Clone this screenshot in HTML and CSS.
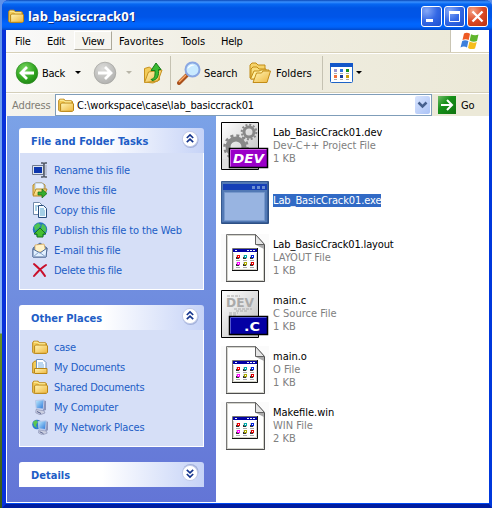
FILE: index.html
```html
<!DOCTYPE html>
<html lang="en">
<head>
<meta charset="utf-8">
<title>lab_basiccrack01</title>
<link rel="stylesheet" href="styles.css">
</head>
<body>
<svg class="defs" aria-hidden="true">
  <defs>
    <linearGradient id="gold" x1="0" y1="0" x2="1" y2="1"><stop offset="0" stop-color="#fff6b8"/><stop offset="1" stop-color="#eeb63c"/></linearGradient>
    <linearGradient id="paper" x1="0" y1="0" x2="1" y2="1"><stop offset="0" stop-color="#ffffff"/><stop offset="1" stop-color="#bdbdbd"/></linearGradient>
    <radialGradient id="green" cx=".4" cy=".3" r=".8"><stop offset="0" stop-color="#7cd664"/><stop offset=".6" stop-color="#2fa51f"/><stop offset="1" stop-color="#1c7d12"/></radialGradient>
    <radialGradient id="gray" cx=".4" cy=".3" r=".8"><stop offset="0" stop-color="#dcdcda"/><stop offset="1" stop-color="#adadab"/></radialGradient>
    <linearGradient id="screen" x1="0" y1="0" x2="1" y2="1"><stop offset="0" stop-color="#c4efff"/><stop offset="1" stop-color="#2472d8"/></linearGradient>
    <symbol id="folder" viewBox="0 0 16 16">
      <path d="M.7 13.200V3.500l1-1.300h4.400l1.300 1.600h6.200l.9 1v8.400l-.8 1H1.600z" fill="#f3cc59" stroke="#b98514"/>
      <path d="M2.600 13.600V7l.9-1h11.100l.9 1v6.500l-1 .8H3.400z" fill="url(#gold)" stroke="#b98514"/>
      <path d="M2 3.200h3.500L7 4.800h6" fill="none" stroke="#fff3a8"/>
    </symbol>
    <symbol id="computer" viewBox="0 0 16 16">
      <path d="M11 1l3 1v9l-3 1z" fill="#8c94ba"/>
      <path d="M3.500 1.500L12 .8l-.8 9.300-7-.8z" fill="url(#screen)" stroke="#b9c7e8"/>
      <path d="M4 10.500l8 1.300 1 2.200-5 1.800-4.200-2z" fill="#cbcfe0" stroke="#8991b5" stroke-width=".7"/>
      <path d="M5 12.500l4 2" stroke="#515c8a"/>
    </symbol>
    <symbol id="chevrons" viewBox="0 0 20 20">
      <circle cx="10.500" cy="11" r="8" fill="#8c9bc9" opacity=".65"/>
      <circle cx="10" cy="10" r="7.600" fill="#fff" stroke="#c3cce9"/>
      <path d="M6.800 9L10 6l3.200 3M6.800 13.200l3.200-3 3.200 3" fill="none" stroke="#15358d" stroke-width="1.700"/>
    </symbol>
    <symbol id="appfile" viewBox="0 0 48 48">
      <path fill="#fbfbfb" d="M0 0h48v48H0z"/>
      <path d="M5.500.5h29l9 10v37h-38z" fill="#fff" stroke="#777"/>
      <path d="M6.500 47V1.500H34M42.500 12v34.500H7" fill="none" stroke="#d4d4cc"/>
      <path d="M34.500.5v10h9z" fill="#e5e5e5" stroke="#606060"/>
      <path d="M35 11h8v4z" fill="#aaa"/>
      <path d="M43.500 11v36.500H5" fill="none" stroke="#4d4d4d"/>
      <path d="M11.500 14.500h25v22h-25z" fill="#fff" stroke="#77776f"/>
      <path d="M11 36.500h25.500V14" fill="none" stroke="#111"/>
      <path d="M12 15h24v3H12z" fill="#0202a4"/>
      <path d="M14 16h2v1h-2zM26 16h2v1h-2zM29 16h2v1h-2zM32 16h2v1h-2z" fill="#e9f3ff"/>
      <path d="M12.500 19v16.500H35.500V19" fill="none" stroke="#d4d4c8"/>
      <g shape-rendering="crispEdges">
      <path d="M15 21h4v4h-4zM22 21h4v4h-4zM29 21h4v4h-4zM15 28h4v4h-4zM22 28h4v4h-4zM29 28h4v4h-4z" fill="#d7d7d7"/>
      <path d="M15 23h3v2h-3zM22 23h3v2h-3zM29 23h3v2h-3zM15 30h3v2h-3zM22 30h3v2h-3zM29 30h3v2h-3z" fill="#333"/>
      <path d="M16 21h3v3h-3z" fill="#e00"/><path d="M23 21h3v3h-3z" fill="#0aa"/><path d="M30 21h3v3h-3z" fill="#02d"/>
      <path d="M16 28h3v3h-3z" fill="#f0f"/><path d="M23 28h3v3h-3z" fill="#aa0"/><path d="M30 28h3v3h-3z" fill="#d00"/>
      <path d="M17 22h1v1h-1zM24 22h1v1h-1zM31 22h1v1h-1zM17 29h1v1h-1zM24 29h1v1h-1zM31 29h1v1h-1z" fill="#fff"/>
      <path d="M15 26h4v1h-4zM22 26h4v1h-4zM29 26h4v1h-4zM15 33h4v1h-4zM22 33h4v1h-4zM29 33h4v1h-4z" fill="#aaa"/>
      </g>
    </symbol>
  </defs>
</svg>

<div class="desktop">
<div class="window">
  <header class="titlebar">
    <svg class="i16"><use href="#folder"/></svg>
    <h1 class="title">lab_basiccrack01</h1>
    <div class="controls">
      <span class="ctl"><svg viewBox="0 0 21 21"><path d="M5 13h7v3H5z" fill="#fff"/></svg></span>
      <span class="ctl"><svg viewBox="0 0 21 21"><path d="M5.500 6v9.500h10V6" fill="none" stroke="#fff"/><path d="M5 5h11v3H5z" fill="#fff"/></svg></span>
      <span class="ctl close"><svg viewBox="0 0 21 21"><path d="M5.500 5.500l10 10M15.500 5.500l-10 10" stroke="#fff" stroke-width="2.300"/></svg></span>
    </div>
  </header>

  <nav class="menubar">
    <span class="m file">File</span><span class="m edit">Edit</span><span class="m view">View</span><span class="m fav">Favorites</span><span class="m tools">Tools</span><span class="m help">Help</span>
    <span class="flag"><svg viewBox="0 0 22 20">
      <path d="M5 2.500c2-1.300 4-1 6 .2L9.700 9c-2-1-4-1.200-6.200 0z" fill="#ee5a24"/>
      <path d="M12 3.200c2.500 1.400 5 1.500 7.500.4L18 10c-2.500 1-5 .8-7.300-.6z" fill="#60b52c"/>
      <path d="M3.200 10c2-1.200 4-1 6.200.1L8 16.500c-2-1.200-4.200-1.300-6.500 0z" fill="#3e80dc"/>
      <path d="M10.500 10.600c2.500 1.300 5 1.400 7.300.5L16 17.500c-2.500 1-4.800.7-7-.6z" fill="#f6bd1c"/>
    </svg></span>
  </nav>

  <div class="toolbar">
    <svg class="circle" viewBox="0 0 24 24"><circle cx="12" cy="12" r="10.800" fill="url(#green)" stroke="#2a8a20" stroke-width=".7"/><path d="M19 12H7M12 6l-6 6 6 6" fill="none" stroke="#fff" stroke-width="2.800"/></svg>
    <span class="t back">Back</span><i class="drop"></i>
    <svg class="circle fwd" viewBox="0 0 24 24"><circle cx="12" cy="12" r="10.800" fill="url(#gray)" stroke="#a0a09c" stroke-width=".7"/><path d="M5 12h12M12 6l6 6-6 6" fill="none" stroke="#fff" stroke-width="2.800"/></svg>
    <i class="drop off"></i>
    <svg class="up" viewBox="0 0 20 24">
      <path d="M1.500 21V7.500l5-1.500 2 2 8 1v10L10 22z" fill="#f3cc59" stroke="#c6921f"/>
      <path d="M1.500 21.500l4-10.500L19 9l-4 11z" fill="url(#gold)" stroke="#c6921f"/>
      <path d="M8 18.500c4-1 4.200-4 4-9H8L13 2l5 6.500h-2.500c.5 6-1 10.500-6.500 11z" fill="#3bbb33" stroke="#157d18"/>
    </svg>
    <i class="sep s1"></i>
    <svg class="i24" viewBox="0 0 24 24">
      <path d="M2 22l8-8" stroke="#a9511c" stroke-width="4" stroke-linecap="round"/><path d="M2 21l7-7" stroke="#ffac68" stroke-width="1.500"/>
      <circle cx="15.500" cy="8.500" r="7" fill="#c9eaff" stroke="#8aa7e2" stroke-width="2"/><path d="M10.500 8c1-4 5-5 7-3.500-3 .2-5 1.500-7 3.500z" fill="#fff"/>
    </svg>
    <span class="t search">Search</span>
    <svg class="i24" viewBox="0 0 24 24">
      <path d="M2 17V4l2-2h4l2 2h7v13z" fill="#f5d36a" stroke="#c28c16"/>
      <path d="M3 17V8l2-2h4l2 2h7v10H3z" fill="#f8dd7b" stroke="#c28c16"/>
      <path d="M2.500 18L6 10h5l2-1h8l-3 9z" fill="#fff0a0" stroke="#c28c16"/>
      <path d="M5 21.500L8.500 12h5l1.500-2h7.500L19 21.500z" fill="url(#gold)" stroke="#c28c16"/>
    </svg>
    <span class="t folders">Folders</span>
    <i class="sep s2"></i>
    <svg class="views" viewBox="0 0 23 20">
      <rect x=".5" y=".5" width="22" height="19" rx="1" fill="#fff" stroke="#1d63c7"/><path d="M0 0h23v4H0z" fill="#1256c9"/>
      <path d="M4 6h3v3H4z" fill="#9a93cf"/><path d="M10 6h3v3h-3z" fill="#2b73e0"/><path d="M16 6h3v3h-3z" fill="#14921c"/>
      <path d="M4 12h3v3H4z" fill="#f3703b"/><path d="M10 12h3v3h-3z" fill="#123a99"/><path d="M16 12h3v3h-3z" fill="#cc9f0b"/>
      <path d="M4 10.500h3M10 10.500h3M16 10.500h3M4 16.500h3M10 16.500h3M16 16.500h3" stroke="#aaa"/>
    </svg>
    <i class="drop"></i>
  </div>

  <div class="address">
    <span class="alabel">Address</span>
    <div class="abox">
      <svg class="i16"><use href="#folder"/></svg><span class="path">C:\workspace\case\lab_basiccrack01</span>
      <span class="combo"><svg viewBox="0 0 15 18"><path d="M3.500 6.500L7.500 10.500l4-4" fill="none" stroke="#46608e" stroke-width="2.500"/></svg></span>
    </div>
    <span class="gobtn"><svg viewBox="0 0 18 18"><path d="M3 9h10M9 4l5 5-5 5" fill="none" stroke="#fff" stroke-width="2"/></svg></span>
    <span class="go">Go</span>
  </div>

  <div class="content">
    <aside class="side">
      <section class="panel tasks">
        <h2 class="phead"><span>File and Folder Tasks</span><svg class="chev"><use href="#chevrons"/></svg></h2>
        <ul class="links">
          <li><svg class="i16" viewBox="0 0 16 16"><path d="M.5 3.500h11v9H.5z" fill="#dce4ef" stroke="#6e7991"/><path d="M2 5h8v6H2z" fill="#0c36af"/><path d="M9 1h2l1 1 1-1h2M12 2v12M9 15h2l1-1 1 1h2" fill="none" stroke="#545b68" stroke-width="1.600"/><path d="M14 3v10" stroke="#9da4b2"/></svg><span>Rename this file</span></li>
          <li><svg class="i16" viewBox="0 0 16 16"><path d="M1 3l3-2h6l3 2v10H1z" fill="#f2ce6b" stroke="#b98a28"/><path d="M3 1h7l2 2v5H3z" fill="#edf6ff" stroke="#91aac7" stroke-width=".7"/><path d="M1 14l3-7h11l-3 7z" fill="url(#gold)" stroke="#b98a28"/><path d="M6 10h4V7l5 4.500L10 16v-3H6z" fill="#35ae2d" stroke="#176b1c" stroke-width=".7"/></svg><span>Move this file</span></li>
          <li><svg class="i16" viewBox="0 0 16 16"><path d="M1.500.5h6l3 3v9h-9z" fill="#fff" stroke="#718aaa"/><path d="M6.500 3.500h5l3 3v9h-8z" fill="#f2faff" stroke="#294d7d"/><path d="M3 4h3M3 6h2M3 8h2M8 7h4M8 9h5M8 11h5M8 13h5" stroke="#56a3cd"/></svg><span>Copy this file</span></li>
          <li><svg class="i16" viewBox="0 0 16 16"><circle cx="8" cy="7.500" r="7.200" fill="#2673be"/><path d="M2 4l4-3 3 2-2 3-4 3zM10 2c4 1 5 5 4 8l-3-1-2-3z" fill="#4dc454"/><path d="M8 6l6 6h-3v3H5v-3H2z" fill="#45bf2f" stroke="#16751e"/></svg><span class="publish">Publish this file to the Web</span></li>
          <li><svg class="i16" viewBox="0 0 16 16"><path d="M1 6l7-5 7 5-1 9H1z" fill="#6f94c2" stroke="#526c98"/><path d="M3 3l9-1 2 8H3z" fill="#fff2c9" stroke="#d9a247" stroke-width=".7"/><path d="M1 7l7 4 7-5-1 9H1z" fill="#e2f0ff" stroke="#526c98"/><path d="M1 15l6-5 7 5" fill="none" stroke="#8aa5cc"/></svg><span>E-mail this file</span></li>
          <li><svg class="i16" viewBox="0 0 16 16"><path d="M2 2c5 4 8 7 11 12M14 3C9 6 6 9 2 14" fill="none" stroke="#c9102b" stroke-width="2" stroke-linecap="round"/></svg><span>Delete this file</span></li>
        </ul>
      </section>
      <section class="panel places">
        <h2 class="phead"><span>Other Places</span><svg class="chev"><use href="#chevrons"/></svg></h2>
        <ul class="links">
          <li><svg class="i16"><use href="#folder"/></svg><span>case</span></li>
          <li><svg class="i16" viewBox="0 0 16 16"><path d="M.7 14V4l2-2h3v12z" fill="#f3cc59" stroke="#b98514"/><path d="M4.500.5H11l3 3V11H4.500z" fill="#fff" stroke="#6e91bf"/><path d="M6 4h5M6 6h6M6 8h6" stroke="#79aee0"/><path d="M2.500 14V9.500H15v5H3z" fill="url(#gold)" stroke="#b98514"/></svg><span>My Documents</span></li>
          <li><svg class="i16"><use href="#folder"/></svg><span>Shared Documents</span></li>
          <li><svg class="i16"><use href="#computer"/></svg><span>My Computer</span></li>
          <li><svg class="i16" viewBox="0 0 16 16"><circle cx="5" cy="5.500" r="4.800" fill="#2e7bd0"/><path d="M1 3l3-2 2 2-2 3 1 3-3-2z" fill="#5bc750"/><use href="#computer" x="3" y="1" width="15" height="15"/></svg><span class="network">My Network Places</span></li>
        </ul>
      </section>
      <section class="panel details">
        <h2 class="phead"><span>Details</span><svg class="chev down"><use href="#chevrons"/></svg></h2>
      </section>
    </aside>

    <main class="files">
      <article class="f">
        <svg class="i48" viewBox="0 0 48 48">
          <path d="M.5.500h37v47H.5z" fill="url(#paper)" stroke="#000"/>
          <g fill="none" stroke="#888"><circle cx="28" cy="10" r="5" stroke-width="3"/><circle cx="28" cy="10" r="7.300" stroke-width="2" stroke-dasharray="2 1.820"/><circle cx="15" cy="25" r="8" stroke-width="5"/><circle cx="15" cy="25" r="11.500" stroke-width="2.500" stroke-dasharray="3 3.020"/></g>
          <path d="M1 37h7v10H1z" fill="#ddd"/>
          <path d="M8.500 26.500h38v19h-38z" fill="#9a00c8" stroke="#000" stroke-width="1.500"/><path d="M9.500 44.500v-17h36" fill="none" stroke="#cf62e8"/>
          <text class="dev" x="12" y="41" textLength="31" lengthAdjust="spacingAndGlyphs">DEV</text>
        </svg>
        <div class="ft"><span class="n">Lab_BasicCrack01.dev</span><span class="d">Dev-C++ Project File</span><span class="d">1 KB</span></div>
      </article>
      <article class="f">
        <svg class="i48" viewBox="0 0 48 48">
          <path d="M.5 3.500h47v42H.5z" fill="#5279b5" stroke="#36598f"/><path d="M2 6h44v6H2z" fill="#153fb7"/><path d="M31 8h3v3h-3zM36 8h3v3h-3zM41 8h3v3h-3z" fill="#6c8fd2"/>
          <path d="M3.500 14.500h40v28h-40z" fill="#98b4e1" stroke="#7799cd"/><path d="M47 4v41H1" fill="none" stroke="#24497c"/>
        </svg>
        <div class="ft single"><span class="n sel">Lab_BasicCrack01.exe</span></div>
      </article>
      <article class="f"><svg class="i48"><use href="#appfile"/></svg><div class="ft"><span class="n layout">Lab_BasicCrack01.layout</span><span class="d">LAYOUT File</span><span class="d">1 KB</span></div></article>
      <article class="f">
        <svg class="i48" viewBox="0 0 48 48">
          <path d="M.5.500h37v47H.5z" fill="url(#paper)" stroke="#000"/>
          <path d="M6 6h13M13 19h18M15 21h12M8 23h9M8 25h7" stroke="#aaa" stroke-dasharray="3 1"/>
          <text class="ghost" x="5" y="17" textLength="28" lengthAdjust="spacingAndGlyphs">DEV</text>
          <path d="M8.500 26.500h38v18h-38z" fill="#0400a4" stroke="#000" stroke-width="1.500"/><path d="M9.500 43.500v-16h36" fill="none" stroke="#5457ce"/>
          <text class="cee" x="23" y="41" textLength="16" lengthAdjust="spacingAndGlyphs">.C</text>
        </svg>
        <div class="ft"><span class="n short">main.c</span><span class="d">C Source File</span><span class="d">1 KB</span></div>
      </article>
      <article class="f"><svg class="i48"><use href="#appfile"/></svg><div class="ft"><span class="n short">main.o</span><span class="d">O File</span><span class="d">1 KB</span></div></article>
      <article class="f"><svg class="i48"><use href="#appfile"/></svg><div class="ft"><span class="n short">Makefile.win</span><span class="d">WIN File</span><span class="d">2 KB</span></div></article>
    </main>
  </div>
</div>
</div>
</body>
</html>
```
FILE: styles.css
```css
* { box-sizing: border-box; }
body { margin: 0; width: 492px; height: 508px; overflow: hidden; font: 11px/13px "DejaVu Sans Condensed", "DejaVu Sans", sans-serif; font-stretch: condensed; color: #000; letter-spacing: -.25px; }
.defs { position: absolute; width: 0; height: 0; }
svg { display: block; flex: none; }
span { white-space: nowrap; }
.desktop { height: 508px; padding-left: 2px; background: linear-gradient(#5e91ea 0, #8db7f5 332px, #8db7f5 333px, #6b9421 334px, #365716 100%); }
.window { height: 508px; border: solid #003bda; border-width: 0 3px 4px 4px; border-color: #003bda #0038dc #001da0 #0831d9; border-radius: 7px 7px 0 0; background: #fff; display: flex; flex-direction: column; box-shadow: inset 0 -1px #0048f1; }
.i16 { width: 16px; height: 16px; }
.i24 { width: 24px; height: 24px; }

.titlebar { height: 30px; flex: none; margin: 0 -3px 0 -4px; padding: 2px 4px 0 6px; display: flex; align-items: center; border-radius: 7px 7px 0 0; background: linear-gradient(#0a48b8 0, #3990ff 2px, #0768f2 4px, #0055e5 8px, #0055e8 17px, #0066ff 24px, #0062f8 27px, #0049cb 30px); }
.title { margin: 0 0 0 4px; color: #fff; font: bold 13px/18px "Noto Sans", sans-serif; font-stretch: normal; letter-spacing: 0; text-shadow: 1px 1px #0b2b83; }
.controls { margin-left: auto; display: flex; gap: 2px; }
.ctl { width: 21px; height: 21px; border: 1px solid #fff; border-radius: 3px; background: radial-gradient(circle at 25% 20%, #86a9f7, #3468e5 50%, #1c50cf); }
.ctl svg { width: 21px; height: 21px; margin: -1px; }
.close { background: radial-gradient(circle at 25% 20%, #f4a184, #dc4a25 50%, #b9300c); }

.menubar { height: 24px; flex: none; display: flex; align-items: flex-start; background: linear-gradient(90deg, #fafafa, #f1efe4 40%, #ece9d8); border-bottom: 1px solid #fff; box-shadow: inset 0 -1px #d6d0b9; }
.m { height: 19px; margin-top: 1px; line-height: 21px; }
.file { width: 32px; margin-left: 9px; }
.edit { width: 27px; }
.view { width: 38px; padding-left: 7px; border: 1px solid #fff; border-right-color: #aca899; border-bottom-color: #aca899; line-height: 19px; background: #f6f5ef; }
.fav { width: 62px; margin-left: 7px; letter-spacing: 0; }
.tools { width: 40px; letter-spacing: 0; }
.flag { margin-left: auto; width: 39px; height: 22px; padding: 0 0 0 8px; background: #fff; border-left: 1px solid #c9c5b4; }
.flag svg { width: 22px; height: 20px; margin-top: 1px; }

.toolbar { height: 39px; flex: none; display: flex; align-items: center; padding-left: 9px; background: linear-gradient(90deg, #f9f9f7, #f0eee2 40%, #ece9d8); border-bottom: 1px solid #d4cfba; }
.circle { width: 24px; height: 24px; }
.back { width: 33px; margin-left: 3px; }
.drop { border: solid transparent; border-width: 3px 3px 0; border-top-color: #000; width: 6px; height: 3px; margin-top: -2px; }
.fwd { margin-left: 12px; }
.off { border-top-color: #b8b5a8; margin-left: 9px; }
.up { width: 20px; height: 24px; margin-left: 11px; }
.sep { width: 1px; height: 34px; background: #c5c2b2; }
.s1 { margin: 0 6px 0 7px; }
.search { width: 44px; margin-left: 3px; letter-spacing: -.1px; }
.folders { width: 46px; margin-left: 4px; letter-spacing: 0; }
.s2 { margin-right: 7px; }
.views { width: 23px; height: 20px; margin-right: 3px; }

.address { height: 23px; flex: none; display: flex; align-items: center; border-top: 1px solid #fff; background: linear-gradient(90deg, #f5f4ee, #ece9d8 40%); }
.alabel { width: 43px; margin-left: 6px; color: #7f7c73; letter-spacing: -.1px; }
.abox { width: 377px; height: 22px; display: flex; align-items: center; padding: 0 1px 0 2px; background: #fff; border: 1px solid #7f9db9; }
.path { margin-left: 3px; letter-spacing: -.12px; }
.combo { margin-left: auto; width: 15px; height: 18px; border-radius: 2px; background: linear-gradient(135deg, #d8e4fe, #abc3f6); }
.combo svg { width: 15px; height: 18px; }
.gobtn { width: 18px; height: 18px; margin-left: 6px; background: linear-gradient(135deg, #71bd67, #169019 40%, #107410); }
.gobtn svg { width: 18px; height: 18px; }
.go { margin-left: 5px; }

.content { flex: 1; display: flex; min-height: 0; margin-bottom: 1px; border-bottom: 1px solid #fff; }
.side { width: 210px; flex: none; padding: 12px 12px 0 12px; border-left: 1px solid #fff; background: linear-gradient(#7ba2e7, #6375d6); }
.panel { width: 185px; margin-bottom: 15px; }
.phead { position: relative; height: 25px; margin: 0; padding: 0 0 0 12px; border-radius: 3px 3px 0 0; background: linear-gradient(90deg, #fff 45%, #c6d3f7); color: #215dc6; font: bold 11px/28px "DejaVu Sans Condensed", "DejaVu Sans", sans-serif; font-stretch: condensed; letter-spacing: .02px; }
.chev { position: absolute; right: 4px; top: 1px; width: 20px; height: 20px; }
.down { transform: scaleY(-1); }
.links { list-style: none; margin: 0; padding: 7px 0 0 12px; border: 1px solid #fff; border-top: 0; background: #d6dff7; color: #215dc6; }
.tasks .links { height: 137px; }
.places .links { height: 117px; }
.links li { height: 20px; display: flex; align-items: center; gap: 6px; }
.publish { letter-spacing: -.14px; }
.network { letter-spacing: -.18px; }

.files { padding: 6px 0 0 5px; }
.f { height: 56px; display: flex; gap: 4px; }
.i48 { width: 48px; height: 48px; }
.ft { height: 48px; width: 160px; padding-top: 4px; display: flex; flex-direction: column; align-items: flex-start; }
.single { padding-top: 16px; }
.n { letter-spacing: -.1px; }
.layout { letter-spacing: -.14px; }
.short { letter-spacing: 0; }
.d { color: #808080; letter-spacing: 0; }
.sel { background: #316ac5; color: #fff; }
.dev, .cee, .ghost { font: bold 13px "DejaVu Sans", sans-serif; fill: #fff; letter-spacing: 0; }
.dev { font-style: italic; }
.ghost { fill: #aaa; font-size: 12px; }
```
